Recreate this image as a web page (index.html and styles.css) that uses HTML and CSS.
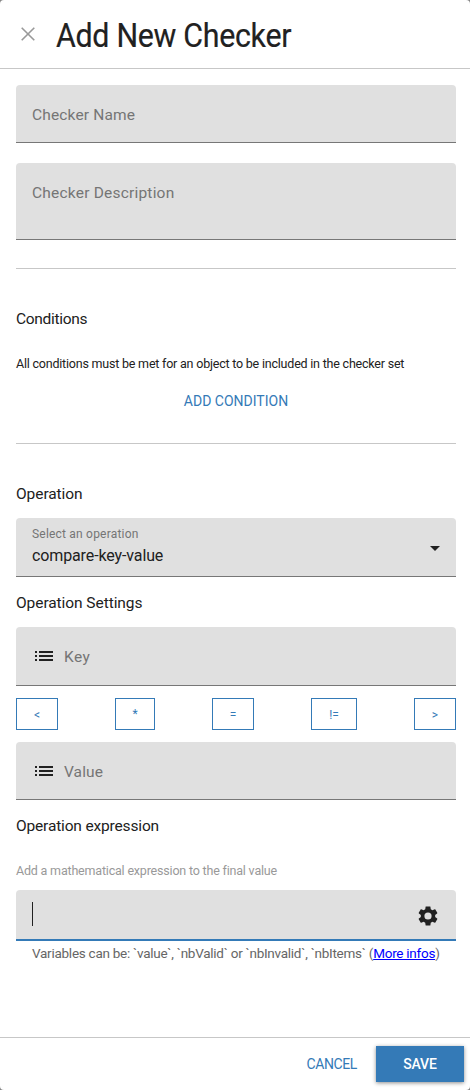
FILE: index.html
```html
<!DOCTYPE html>
<html lang="en">
<head>
<meta charset="utf-8">
<title>Add New Checker</title>
<link rel="stylesheet" href="styles.css">
</head>
<body>
<div class="dialog">
  <header class="header">
    <svg class="close" viewBox="0 0 14 14"><path d="M.7.7l12.6 12.6M13.3.7L.7 13.3"/></svg>
    <h1 class="title">Add New Checker</h1>
  </header>
  <main class="content">
    <div class="field name"><span class="label label-name">Checker Name</span></div>
    <div class="field description"><span class="label label-description">Checker Description</span></div>
    <section class="section conditions">
      <h2 class="heading heading-conditions">Conditions</h2>
      <p class="note">All conditions must be met for an object to be included in the checker set</p>
      <button class="text-button add">ADD CONDITION</button>
    </section>
    <section class="section operation">
      <h2 class="heading heading-operation">Operation</h2>
      <div class="field select">
        <div class="select-text"><span class="small-label">Select an operation</span><span class="value">compare-key-value</span></div>
        <svg class="arrow" viewBox="0 0 10 5"><path d="M0 0h10L5 5z"/></svg>
      </div>
      <h2 class="heading heading-settings">Operation Settings</h2>
      <div class="field key">
        <svg class="list" viewBox="0 0 18 10"><path d="M0 0h2v2H0zM4 0h14v2H4zM0 4h2v2H0zM4 4h14v2H4zM0 8h2v2H0zM4 8h14v2H4z"/></svg>
        <span class="label label-key">Key</span>
      </div>
      <div class="operators">
        <button class="operator">&lt;</button>
        <button class="operator star">*</button>
        <button class="operator">=</button>
        <button class="operator unequal">!=</button>
        <button class="operator">&gt;</button>
      </div>
      <div class="field key-value">
        <svg class="list" viewBox="0 0 18 10"><path d="M0 0h2v2H0zM4 0h14v2H4zM0 4h2v2H0zM4 4h14v2H4zM0 8h2v2H0zM4 8h14v2H4z"/></svg>
        <span class="label label-value">Value</span>
      </div>
      <h2 class="heading heading-expression">Operation expression</h2>
      <p class="hint">Add a mathematical expression to the final value</p>
      <div class="field expression">
        <span class="caret"></span>
        <svg class="gear" viewBox="0 0 24 24"><path d="M19.14 12.94c.04-.3.06-.61.06-.94s-.02-.64-.07-.94l2.03-1.58c.18-.14.23-.41.12-.61l-1.92-3.32c-.12-.22-.37-.29-.59-.22l-2.39.96c-.5-.38-1.03-.7-1.62-.94l-.36-2.54c-.04-.24-.24-.41-.48-.41h-3.84c-.24 0-.43.17-.47.41l-.36 2.54c-.59.24-1.13.57-1.62.94l-2.39-.96c-.22-.08-.47 0-.59.22L2.74 8.87c-.12.21-.08.47.12.61l2.03 1.58c-.05.3-.09.63-.09.94s.02.64.07.94l-2.03 1.58c-.18.14-.23.41-.12.61l1.92 3.32c.12.22.37.29.59.22l2.39-.96c.5.38 1.03.7 1.62.94l.36 2.54c.05.24.24.41.48.41h3.84c.24 0 .44-.17.47-.41l.36-2.54c.59-.24 1.13-.56 1.62-.94l2.39.96c.22.08.47 0 .59-.22l1.92-3.32c.12-.22.07-.47-.12-.61zM12 15.6a3.6 3.6 0 1 1 0-7.2 3.6 3.6 0 0 1 0 7.2z"/></svg>
      </div>
      <p class="helper">Variables can be: `value`, `nbValid` or `nbInvalid`, `nbItems` (<a class="link" href="#">More infos</a>)</p>
    </section>
  </main>
  <footer class="footer">
    <button class="text-button cancel">CANCEL</button>
    <button class="save">SAVE</button>
  </footer>
</div>
</body>
</html>
```
FILE: styles.css
```css
* { box-sizing: border-box; }
body { margin: 0; background: #858585; font-family: Roboto, sans-serif; color: #212121; }
button { font-family: inherit; background: none; border: 0; padding: 0; }
h1, h2, p { margin: 0; font-weight: 400; white-space: nowrap; }
svg { display: block; flex: none; }
.dialog { width: 470px; height: 1090px; background: #fff; border-radius: 4px; display: flex; flex-direction: column; overflow: hidden; }
.header { height: 69px; flex: none; border-bottom: 1px solid #c7c7c7; display: flex; align-items: center; padding: 2px 21px 0; gap: 21px; }
.close { width: 14px; height: 14px; fill: none; stroke: #999; stroke-width: 1.6; margin-top: -2px; }
.title { font-size: 33px; line-height: 40px; padding-top: 1px; letter-spacing: -.32px; transform: scaleX(.92); transform-origin: left; -webkit-text-stroke: .2px #212121; }
.content { flex: 1; padding: 16px 14px 0 16px; }
.field { display: flex; align-items: center; background: #e0e0e0; border-bottom: 1px solid #777; border-radius: 4px 4px 0 0; padding: 0 16px; }
.name { height: 58px; padding-top: 2px; }
.description { height: 77px; margin-top: 20px; align-items: flex-start; padding-top: 20px; }
.label { font-size: 15.5px; line-height: 20px; letter-spacing: .15px; color: #757575; white-space: nowrap; }
.label-description { letter-spacing: .21px; }
.label-key { letter-spacing: .4px; }
.label-value { letter-spacing: .1px; }
.section { border-top: 1px solid #c7c7c7; }
.conditions { height: 175px; margin-top: 28px; padding-top: 38px; display: flex; flex-direction: column; }
.heading { font-size: 15.5px; line-height: 24px; letter-spacing: -.07px; }
.heading-conditions { letter-spacing: -.3px; }
.note { font-size: 12.5px; line-height: 20px; margin-top: 23px; letter-spacing: -.21px; }
.text-button { color: #347ab7; font-size: 14px; line-height: 20px; white-space: nowrap; }
.add { align-self: center; margin-top: 17px; }
.operation { padding-top: 38px; }
.select { height: 59px; margin-top: 12px; justify-content: space-between; }
.select-text { display: flex; flex-direction: column; padding-bottom: 1px; }
.small-label { font-size: 12px; line-height: 16px; padding-bottom: 2px; letter-spacing: .2px; color: #757575; }
.value { font-size: 16px; line-height: 24px; letter-spacing: -.12px; }
.arrow { width: 10px; height: 5px; fill: #212121; margin-top: 3px; }
.heading-settings { margin-top: 14px; }
.key { height: 59px; margin-top: 12px; }
.key, .key-value { padding-left: 19px; gap: 11px; }
.label-key, .label-value { padding-top: 2px; }
.list { width: 18px; height: 10px; fill: #212121; }
.operators { display: flex; justify-content: space-between; margin: 12px 0; }
.operator { width: 42px; height: 32px; border: 1px solid #347ab7; color: #347ab7; font-size: 12px; line-height: 28px; padding-top: 2px; }
.star { width: 40px; padding-top: 0; }
.unequal { width: 46px; }
.key-value { height: 58px; }
.heading-expression { margin-top: 14px; letter-spacing: -.16px; }
.hint { font-size: 12.5px; line-height: 20px; margin-top: 23px; letter-spacing: -.19px; color: #999; }
.expression { height: 51px; margin-top: 9px; border-bottom: 2px solid #347ab7; justify-content: space-between; }
.caret { width: 1px; height: 24px; margin-bottom: 1px; background: #212121; }
.gear { width: 24px; height: 24px; fill: #212121; margin-top: 3px; }
.helper { font-size: 13.5px; line-height: 20px; letter-spacing: -.26px; margin: 2px 0 0 16px; color: #666; }
.link { color: #00f; }
.footer { height: 53px; flex: none; border-top: 1px solid #c7c7c7; display: flex; justify-content: flex-end; align-items: center; padding-right: 6px; gap: 19px; }
.cancel { font-size: 14px; letter-spacing: -.4px; }
.save { width: 88px; height: 36px; background: #347ab7; color: #fff; font-size: 14px; font-weight: 500; letter-spacing: -.2px; box-shadow: 0 1px 4px rgba(0,0,0,.45); }
```
